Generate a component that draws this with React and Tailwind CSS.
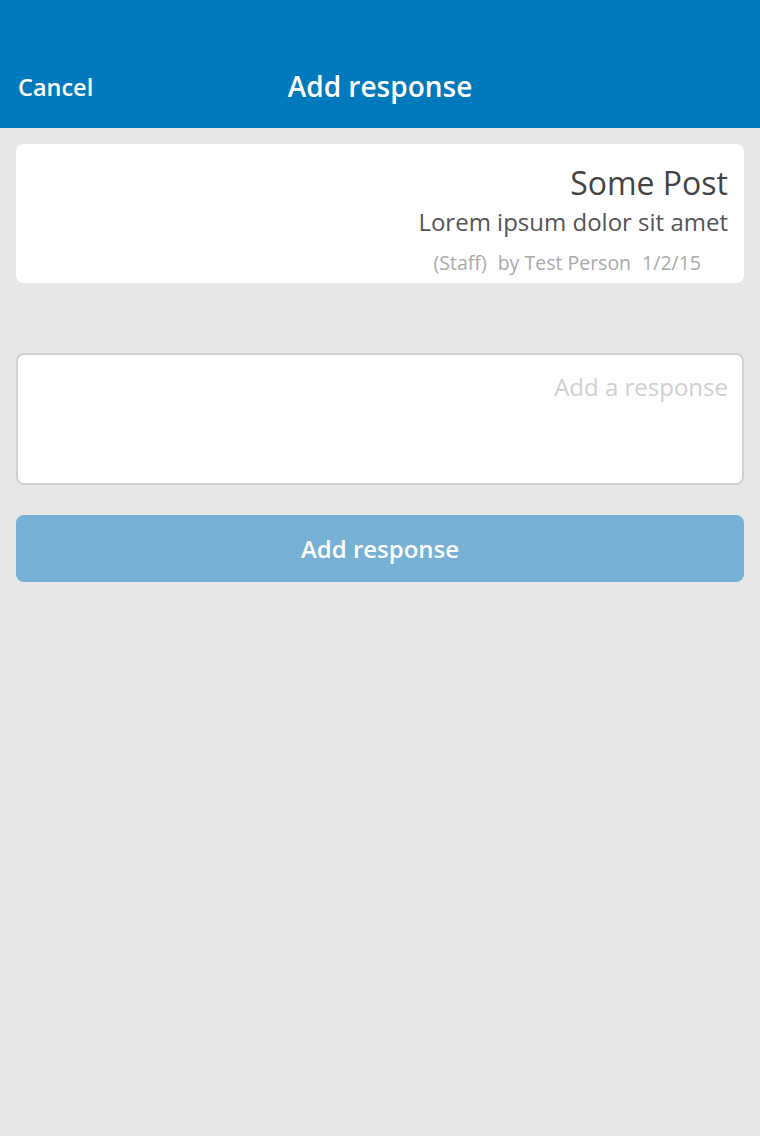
export default function App() {
  const font = { fontFamily: '"Open Sans", "Noto Sans", sans-serif' };
  return (
    <div className="w-[760px] h-[1136px] bg-[#e7e7e7] flex flex-col" style={font}>
      <div className="h-[128px] bg-[#0079bd] relative flex items-end pb-[26px] px-[18px] shrink-0">
        <span className="text-white text-[23.5px] font-semibold leading-[30px]">Cancel</span>
        <span className="absolute left-0 right-0 bottom-[24px] text-center text-white text-[28px] font-semibold leading-[36px] pointer-events-none">Add response</span>
      </div>
      <div className="px-[16px] pt-[16px] flex flex-col">
        <div className="bg-white rounded-[8px] h-[139px] flex flex-col items-end pr-[16px] pt-[19px]">
          <div className="text-[32px] leading-[40px] text-[#444]">Some Post</div>
          <div className="text-[24px] leading-[32px] text-[#555] mt-[3px]">Lorem ipsum dolor sit amet</div>
          <div className="text-[19.5px] leading-[26px] text-[#aaa] mt-[12px] pr-[27px] flex gap-[11px]">
            <span>(Staff)</span>
            <span>by Test Person</span>
            <span>1/2/15</span>
          </div>
        </div>
        <div className="mt-[70px] bg-white rounded-[8px] border-2 border-[#d2d2d2] h-[132px] flex justify-end pr-[14px] pt-[16px]">
          <span className="text-[24px] leading-[32px] text-[#d0d0d0]">Add a response</span>
        </div>
        <div className="mt-[30px] bg-[#76b1d5] rounded-[8px] h-[67px] flex items-center justify-center">
          <span className="text-white text-[24px] font-semibold leading-[32px]">Add response</span>
        </div>
      </div>
    </div>
  );
}
